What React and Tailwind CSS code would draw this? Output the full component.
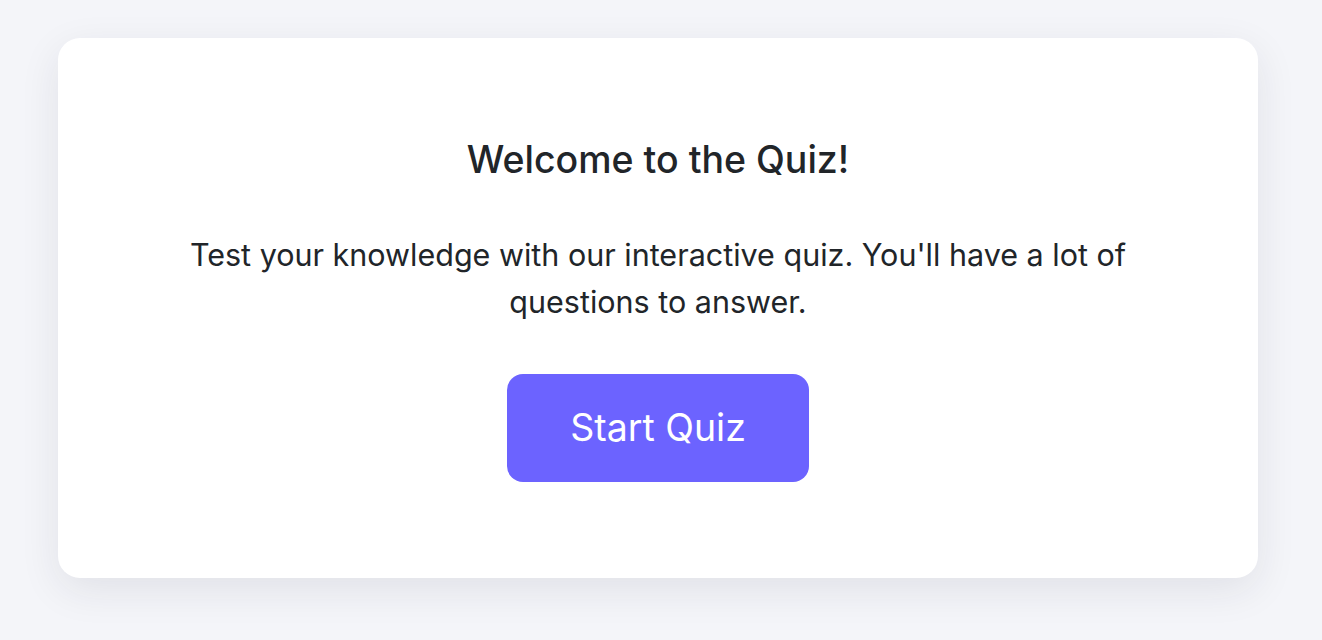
export default function App() {
  return (
    <div
      className="min-h-[640px] bg-[#f4f5f9] pt-[38px]"
      style={{ fontFamily: 'Inter, "Noto Sans", sans-serif' }}
    >
      <div className="ml-[58px] flex h-[540px] w-[1200px] flex-col items-center rounded-[22px] bg-white px-24 pt-[100px] text-center shadow-[0_12px_40px_rgba(30,35,60,0.09)]">
        <h1 className="text-[37.5px] font-medium leading-[44px] text-[#212529]">Welcome to the Quiz!</h1>
        <p className="mt-[49px] max-w-[980px] text-[30.5px] leading-[47px] text-[#212529]">
          Test your knowledge with our interactive quiz. You'll have a lot of questions to answer.
        </p>
        <button className="mt-[49px] h-[108px] w-[302px] rounded-2xl bg-[#6c63ff] text-[37.5px] text-white">
          Start Quiz
        </button>
      </div>
    </div>
  )
}
